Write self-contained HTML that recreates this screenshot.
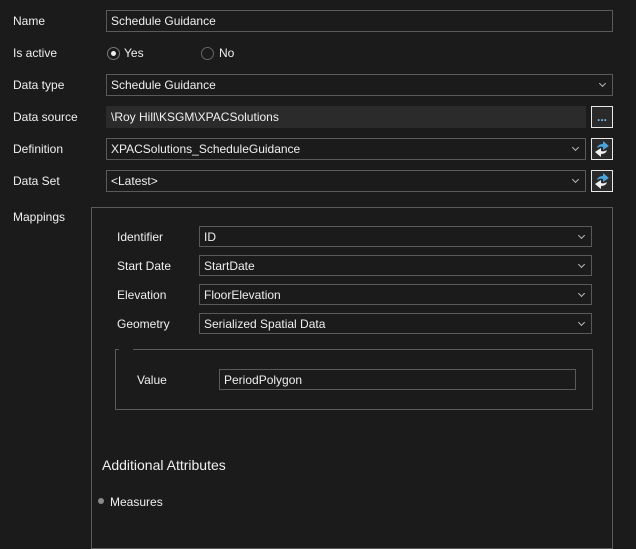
<!DOCTYPE html>
<html><head><style>
body{margin:0;width:636px;height:540px;background:#1b1b1b;font-family:"Liberation Sans",sans-serif;font-size:12px;color:#f0f0f0;position:relative;overflow:hidden}
.a{position:absolute}
.lbl{position:absolute;line-height:14px}
.in{position:absolute;box-sizing:border-box;border:1px solid #5a5a5a;height:22px;line-height:21px;padding-left:4px;background:#1b1b1b}
.dd::after{content:"";position:absolute;right:7px;top:6px;width:4px;height:4px;border-right:1px solid #bbb;border-bottom:1px solid #bbb;transform:rotate(45deg)}
.btn{position:absolute;box-sizing:border-box;border:1px solid #e8e8e8;width:22px;height:22px;background:#2a2a2a}
</style></head><body>
<div class="lbl" style="left:13px;top:14px">Name</div>
<div class="in" style="left:106px;top:10px;width:507px">Schedule Guidance</div>
<div class="lbl" style="left:13px;top:46px">Is active</div>
<div class="a" style="left:107px;top:47px;width:11px;height:11px;border:1px solid #777;border-radius:50%;background:#1b1b1b"><div class="a" style="left:3px;top:3px;width:5px;height:5px;border-radius:50%;background:#eee"></div></div>
<div class="lbl" style="left:124px;top:46px">Yes</div>
<div class="a" style="left:201px;top:47px;width:11px;height:11px;border:1px solid #666;border-radius:50%"></div>
<div class="lbl" style="left:219px;top:46px">No</div>
<div class="lbl" style="left:13px;top:78px">Data type</div>
<div class="in dd" style="left:106px;top:74px;width:507px">Schedule Guidance</div>
<div class="lbl" style="left:13px;top:110px">Data source</div>
<div class="in" style="left:106px;top:106px;width:480px;border:none;background:#2b2b2b;padding-left:5px;line-height:23px">\Roy Hill\KSGM\XPACSolutions</div>
<div class="btn" style="left:591px;top:106px"><span class="a" style="left:5px;top:3px;color:#7ab8e8;font-size:12px;font-weight:bold">...</span></div>
<div class="lbl" style="left:13px;top:142px">Definition</div>
<div class="in dd" style="left:106px;top:138px;width:480px">XPACSolutions_ScheduleGuidance</div>
<div class="btn" style="left:591px;top:138px"><svg width="20" height="20" style="position:absolute;left:0;top:0"><path d="M5 9 Q6 5 11 5 L11 2 L17 7 L11 11 L11 8 Q8 7 5 9Z" fill="#4aa3df"/><path d="M15 11 Q14 15 9 15 L9 18 L3 13 L9 9 L9 12 Q12 13 15 11Z" fill="#f0f0f0"/></svg></div>
<div class="lbl" style="left:13px;top:174px">Data Set</div>
<div class="in dd" style="left:106px;top:170px;width:480px">&lt;Latest&gt;</div>
<div class="btn" style="left:591px;top:170px"><svg width="20" height="20" style="position:absolute;left:0;top:0"><path d="M5 9 Q6 5 11 5 L11 2 L17 7 L11 11 L11 8 Q8 7 5 9Z" fill="#4aa3df"/><path d="M15 11 Q14 15 9 15 L9 18 L3 13 L9 9 L9 12 Q12 13 15 11Z" fill="#f0f0f0"/></svg></div>
<div class="lbl" style="left:13px;top:210px">Mappings</div>
<div class="a" style="left:91px;top:207px;width:520px;height:340px;border:1px solid #5a5a5a"></div>
<div class="lbl" style="left:117px;top:230px">Identifier</div>
<div class="in dd" style="left:199px;top:226px;width:393px;height:21px;line-height:20px">ID</div>
<div class="lbl" style="left:117px;top:259px">Start Date</div>
<div class="in dd" style="left:199px;top:255px;width:393px;height:21px;line-height:20px">StartDate</div>
<div class="lbl" style="left:117px;top:288px">Elevation</div>
<div class="in dd" style="left:199px;top:284px;width:393px;height:21px;line-height:20px">FloorElevation</div>
<div class="lbl" style="left:117px;top:317px">Geometry</div>
<div class="in dd" style="left:199px;top:313px;width:393px;height:21px;line-height:20px">Serialized Spatial Data</div>
<div class="a" style="left:115px;top:349px;width:476px;height:59px;border:1px solid #5a5a5a"></div>
<div class="a" style="left:119px;top:348px;width:14px;height:3px;background:#1b1b1b"></div>
<div class="lbl" style="left:137px;top:373px">Value</div>
<div class="in" style="left:219px;top:369px;width:357px;height:21px;line-height:20px">PeriodPolygon</div>
<div class="lbl" style="left:102px;top:457px;font-size:14px;line-height:16px">Additional Attributes</div>
<div class="a" style="left:98px;top:498px;width:6px;height:6px;border-radius:50%;background:#8a8a8a"></div>
<div class="lbl" style="left:110px;top:495px">Measures</div>
</body></html>
